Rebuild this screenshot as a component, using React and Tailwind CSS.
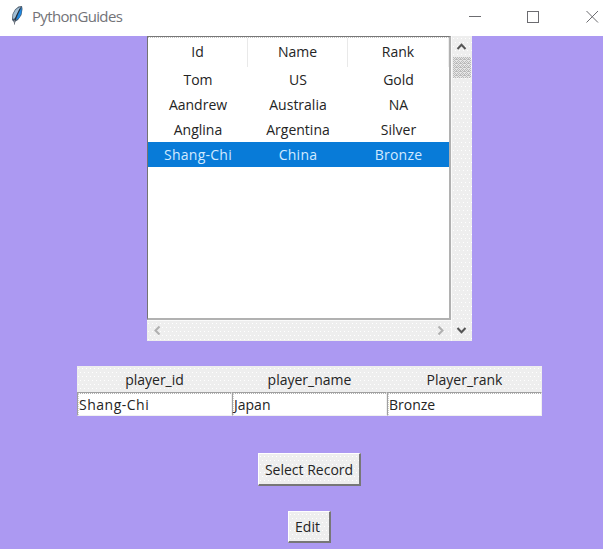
const players = [
  ['Tom', 'US', 'Gold'],
  ['Aandrew', 'Australia', 'NA'],
  ['Anglina', 'Argentina', 'Silver'],
  ['Shang-Chi', 'China', 'Bronze'],
];

function Dither({ id, className, children }) {
  return (
    <div className={`relative bg-[#eeeeee] ${className}`}>
      <svg className="absolute inset-0 h-full w-full" shapeRendering="crispEdges" aria-hidden="true">
        <defs>
          <pattern id={id} width="4" height="8" patternUnits="userSpaceOnUse">
            <rect x="1" y="2" width="1" height="1" fill="#fff" />
            <rect x="3" y="6" width="1" height="1" fill="#fff" />
          </pattern>
        </defs>
        <rect width="100%" height="100%" fill={`url(#${id})`} />
      </svg>
      <div className="relative h-full w-full">{children}</div>
    </div>
  );
}

function Chevron({ className, d }) {
  return (
    <svg className={className} width="11" height="11" viewBox="0 0 11 11" fill="none" stroke="currentColor" strokeWidth="2">
      <path d={d} />
    </svg>
  );
}

function Feather() {
  return (
    <svg className="ml-[10px] mt-[5px] h-5 w-[14px]" viewBox="0 0 14 20">
      <path d="M8.5 1.5 L12 1 L12.5 4 L11.5 10 L8 15 L5.5 16.5 L4.5 19.5 L3.5 16.5 L2 15 L2.5 9 L5 4.5 Z" fill="#4a5a6c" />
      <path d="M11.7 2 L11.5 8 L9.3 13 L6 15 L9 7 Z" fill="#1f87e0" />
      <path d="M8 3 L10.5 2 L7.5 8 L5 13 L3 14 L3.2 9 L5.5 5 Z" fill="#a3bfd4" />
      <path d="M10.2 3.5 L7 10 L4.8 15.5" fill="none" stroke="#1c2b3e" strokeWidth="1" />
      <path d="M4.5 15 V19.5" stroke="#777c84" strokeWidth="1" />
    </svg>
  );
}

function TitleBar() {
  return (
    <header className="flex h-9 bg-white text-[#737378]">
      <Feather />
      <span className="ml-2 mt-[5px] text-[15px] leading-[22px] tracking-[-0.65px]">PythonGuides</span>
      <svg className="ml-auto h-9 w-[135px]" viewBox="0 0 135 36" fill="none" stroke="#6c6c70" shapeRendering="crispEdges">
        <path d="M1 16.5 H13" />
        <rect x="59.5" y="11.5" width="11" height="11" />
        <path d="M118.5 11 L130 22.5 M130 11 L118.5 22.5" shapeRendering="auto" />
      </svg>
    </header>
  );
}

function Tree() {
  return (
    <div className="ml-[147px] grid h-[305px] w-[325px] grid-cols-[305px_20px] grid-rows-[285px_20px] bg-[#fafafa]">
      <div className="mb-px mr-px border-b-2 border-l border-r-2 border-t border-b-[#b1b1b1] border-l-[#737373] border-r-[#b1b1b1] border-t-[#777] bg-white">
        <div className="grid h-[30px] grid-cols-[100px_100px_101px] border-t border-dotted border-[#c4c4c4] text-center leading-[28px]">
          <span className="border-r border-[#e9e9e9]">Id</span>
          <span className="border-r border-[#e9e9e9]">Name</span>
          <span className="border-r border-[#eee]">Rank</span>
        </div>
        {players.map((row, i) => (
          <div
            key={row[0]}
            className={`grid h-[25px] grid-cols-[100px_100px_101px] text-center leading-[26px] ${i === 3 ? 'bg-[#087bd8] tracking-[0.25px] text-[#d2eaff]' : ''}`}
          >
            {row.map((cell) => (
              <span key={cell}>{cell}</span>
            ))}
          </div>
        ))}
      </div>
      <Dither id="v-track" className="row-span-2 text-[#555]">
        <div className="flex h-full flex-col items-center">
          <Chevron className="mt-[5px] -ml-px" d="M1.5 8 L5.5 3.8 L9.5 8" />
          <div className="mt-[5px] w-[18px] self-start">
            <svg className="ml-px block h-[21px] w-[18px]" shapeRendering="crispEdges">
              <defs>
                <pattern id="thumb" width="4" height="4" patternUnits="userSpaceOnUse">
                  <path d="M0 .5h1M2 .5h1M1 1.5h1M3 1.5h1M0 2.5h1M2 2.5h2M1 3.5h1" stroke="#bababa" />
                </pattern>
              </defs>
              <rect width="18" height="21" fill="#e6e6e6" />
              <rect width="18" height="21" fill="url(#thumb)" />
            </svg>
          </div>
          <Chevron className="-ml-px mb-[5px] mt-auto" d="M1.5 3 L5.5 7.2 L9.5 3" />
        </div>
      </Dither>
      <Dither id="h-track" className="mr-px text-[#b0b0b0]">
        <div className="flex h-full items-center justify-between pb-px">
          <Chevron className="ml-[5px]" d="M7.5 1.5 L3.5 5.5 L7.5 9.5" />
          <Chevron className="mr-[5px]" d="M3.5 1.5 L7.5 5.5 L3.5 9.5" />
        </div>
      </Dither>
    </div>
  );
}

function Field({ value, className = '' }) {
  return (
    <div className={`h-full border-b border-l border-r border-t border-b-[#f0f0f0] border-l-[#a0a0a0] border-r-[#f0f0f0] border-t-[#a0a0a0] bg-white ${className}`}>
      <div className="h-full border-l border-t border-dotted border-l-[#d0d0d0] border-t-[#b0b0b0] leading-[21px]">{value}</div>
    </div>
  );
}

function Form() {
  return (
    <div className="ml-[77px] mt-[25px] h-[50px] w-[465px]">
      <Dither id="form-head" className="h-[26px]">
        <div className="grid grid-cols-3 text-center leading-[28px]">
          <span>player_id</span>
          <span>player_name</span>
          <span>Player_rank</span>
        </div>
      </Dither>
      <div className="grid h-6 grid-cols-3">
        <Field value="Shang-Chi" className="tracking-[0.5px]" />
        <Field value="Japan" />
        <Field value="Bronze" />
      </div>
    </div>
  );
}

function Button({ id, className, children }) {
  return (
    <button
      className={`block border-b-2 border-l border-r-2 border-t border-b-[#777] border-l-white border-r-[#777] border-t-white ${className}`}
    >
      <Dither id={id} className="h-full w-full whitespace-nowrap">
        {children}
      </Dither>
    </button>
  );
}

export default function App() {
  return (
    <div className="h-[549px] w-[603px] overflow-hidden bg-[#ac99f2] font-['Open_Sans',sans-serif] text-[14px] text-[#242424]">
      <TitleBar />
      <Tree />
      <Form />
      <Button id="select" className="ml-[258px] mt-[37px] h-[33px] w-[103px] leading-[32px]">
        Select Record
      </Button>
      <Button id="edit" className="ml-[288px] mt-[25px] h-8 w-[43px] leading-[30px]">
        <span className="mr-[3px]">Edit</span>
      </Button>
    </div>
  );
}
